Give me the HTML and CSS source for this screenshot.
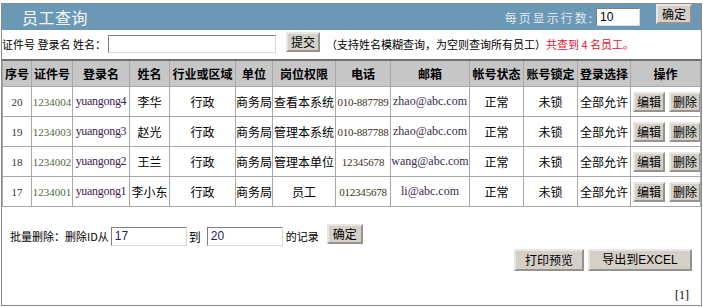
FILE: index.html
```html
<!DOCTYPE html>
<html lang="zh-CN">
<head>
    <meta charset="UTF-8">
    <title>员工查询</title>
    <link rel="stylesheet" href="styles.css">
</head>
<body>
    <div class="page">
        <div class="titlebar">
            <h1>员工查询</h1>
            <div class="pagesize">
                <span class="pagesize-label">每页显示行数:</span>
                <input class="text pagesize-input" type="text" value="10">
                <button class="btn btn-top" type="button">确定</button>
            </div>
        </div>

        <form class="search">
            <label class="search-label" for="keyword">证件号 登录名 姓名：</label>
            <input class="text search-input" type="text" id="keyword">
            <button class="btn" type="button">提交</button>
            <span class="tip">（支持姓名模糊查询，为空则查询所有员工）<span class="count">共查到 4 名员工。</span></span>
        </form>

        <table class="grid">
            <colgroup>
                <col style="width:29px"><col style="width:41px"><col style="width:57px"><col style="width:40px">
                <col style="width:66px"><col style="width:37px"><col style="width:63px"><col style="width:55px">
                <col style="width:79px"><col style="width:54px"><col style="width:54px"><col style="width:53px">
                <col>
            </colgroup>
            <thead>
                <tr>
                    <th>序号</th><th>证件号</th><th>登录名</th><th>姓名</th><th>行业或区域</th><th>单位</th>
                    <th>岗位权限</th><th>电话</th><th>邮箱</th><th>帐号状态</th><th>账号锁定</th><th>登录选择</th><th>操作</th>
                </tr>
            </thead>
            <tbody>
                <tr>
                    <td class="num">20</td><td class="num id">1234004</td><td class="num login">yuangong4</td><td>李华</td>
                    <td>行政</td><td>商务局</td><td>查看本系统</td><td class="num tel">010-887789</td>
                    <td class="num mail">zhao@abc.com</td><td>正常</td><td>未锁</td><td>全部允许</td>
                    <td class="ops"><button class="btn" type="button">编辑</button><button class="btn" type="button">删除</button></td>
                </tr>
                <tr>
                    <td class="num">19</td><td class="num id">1234003</td><td class="num login">yuangong3</td><td>赵光</td>
                    <td>行政</td><td>商务局</td><td>管理本系统</td><td class="num tel">010-887788</td>
                    <td class="num mail">zhao@abc.com</td><td>正常</td><td>未锁</td><td>全部允许</td>
                    <td class="ops"><button class="btn" type="button">编辑</button><button class="btn" type="button">删除</button></td>
                </tr>
                <tr>
                    <td class="num">18</td><td class="num id">1234002</td><td class="num login">yuangong2</td><td>王兰</td>
                    <td>行政</td><td>商务局</td><td>管理本单位</td><td class="num tel">12345678</td>
                    <td class="num mail">wang@abc.com</td><td>正常</td><td>未锁</td><td>全部允许</td>
                    <td class="ops"><button class="btn" type="button">编辑</button><button class="btn" type="button">删除</button></td>
                </tr>
                <tr>
                    <td class="num">17</td><td class="num id">1234001</td><td class="num login">yuangong1</td><td>李小东</td>
                    <td>行政</td><td>商务局</td><td>员工</td><td class="num tel">012345678</td>
                    <td class="num mail">li@abc.com</td><td>正常</td><td>未锁</td><td>全部允许</td>
                    <td class="ops"><button class="btn" type="button">编辑</button><button class="btn" type="button">删除</button></td>
                </tr>
            </tbody>
        </table>

        <div class="batch">
            <span>批量删除：删除ID从</span>
            <input class="text range-input" type="text" value="17">
            <span class="to">到</span>
            <input class="text range-input" type="text" value="20">
            <span class="records">的记录</span>
            <button class="btn btn-ok" type="button">确定</button>
        </div>

        <div class="actions">
            <button class="btn btn-wide" type="button">打印预览</button>
            <button class="btn btn-wide btn-excel" type="button">导出到EXCEL</button>
        </div>

        <div class="pager">[1]</div>
    </div>
</body>
</html>
```

FILE: styles.css
```css
body {
    margin: 0;
    padding: 0;
    background-color: #fff;
    font-family: "Noto Sans CJK SC", "DejaVu Sans", sans-serif;
    font-size: 11px;
    color: #000;
}

.page {
    margin: 3px 1px 0 1px;
    height: 301px;
    border: 1px solid #8a8a8a;
    display: flex;
    flex-direction: column;
}

.titlebar {
    height: 26px;
    background-color: #6b98b4;
    display: flex;
    align-items: center;
    justify-content: space-between;
    padding: 0 9px 0 20px;
}

h1 {
    margin: 0;
    font-size: 16px;
    font-weight: normal;
    color: #f4f8fb;
    letter-spacing: 0.5px;
}

.pagesize {
    display: flex;
    align-items: center;
}

.pagesize-label {
    font-size: 12px;
    color: #dfe8ef;
    letter-spacing: 2px;
    margin-right: 2px;
}

.text {
    box-sizing: border-box;
    height: 18px;
    border: 1px solid #7f7f7f;
    border-right-color: #d8d8d8;
    border-bottom-color: #d8d8d8;
    padding: 0 3px;
    font-family: "Liberation Sans", Arial, sans-serif;
    font-size: 12px;
    color: #2a1a66;
    background: #fff;
}

.pagesize-input {
    width: 44px;
    color: #000;
}

.btn {
    box-sizing: border-box;
    height: 20px;
    padding: 0 4px;
    background-color: #d4d0c8;
    border: 2px outset #e8e6e0;
    font-family: "Noto Sans CJK SC", sans-serif;
    font-size: 12px;
    color: #000;
    line-height: 14px;
}

.btn-top {
    margin-left: 16px;
    margin-top: -6px;
}

.search {
    display: flex;
    align-items: center;
    margin-top: 3px;
    height: 22px;
}

.search-input {
    width: 168px;
    margin-left: 2px;
}

.search .btn {
    width: 34px;
    margin-left: 10px;
    margin-top: -4px;
    padding: 0;
}

.tip {
    margin-left: 6px;
}

.count {
    color: #e8102f;
}

.grid {
    margin-top: 4px;
    width: 100%;
    table-layout: fixed;
    border-collapse: collapse;
    border-top: 2px solid #707070;
}

.grid th {
    height: 25px;
    background-color: #c6c6c6;
    border: 1px solid #a8a8a8;
    font-size: 12px;
    font-weight: bold;
    padding: 0;
    white-space: nowrap;
    overflow: hidden;
}

.grid td {
    height: 29px;
    border: 1px solid #a8a8a8;
    text-align: center;
    font-size: 12px;
    padding: 0;
    white-space: nowrap;
    overflow: hidden;
}

.grid td.num {
    font-family: "Liberation Serif", "Times New Roman", serif;
    font-size: 11px;
    color: #333;
}

.grid td.id {
    color: #4d6b3c;
}

.grid td.login {
    font-size: 12px;
    letter-spacing: -0.3px;
    color: #3e2450;
}

.grid td.tel {
    letter-spacing: -0.2px;
    color: #3a3320;
}

.grid td.mail {
    font-size: 12px;
    color: #3b2a4c;
}

.grid td.ops {
    text-align: center;
}

.ops .btn {
    width: 32px;
    padding: 0;
    margin: 0 2px;
    vertical-align: middle;
}

.batch {
    display: flex;
    align-items: center;
    margin-top: 18px;
    padding-left: 8px;
    height: 22px;
}

.range-input {
    width: 76px;
    height: 19px;
    margin-left: 2px;
}

.to {
    margin: 0 4px 0 2px;
    font-size: 12px;
}

.records {
    margin-left: 3px;
}

.batch .btn-ok {
    width: 36px;
    padding: 0;
    margin-left: 8px;
    margin-top: -4px;
}

.actions {
    display: flex;
    justify-content: flex-end;
    gap: 4px;
    padding-right: 9px;
    margin-top: 2px;
}

.btn-wide {
    height: 22px;
    width: 70px;
}

.btn-excel {
    width: 104px;
    font-family: "Liberation Sans", "Noto Sans CJK SC", sans-serif;
}

.pager {
    margin-top: auto;
    padding: 0 12px 2px 0;
    text-align: right;
    font-family: "Liberation Serif", serif;
    font-size: 12px;
}
```
